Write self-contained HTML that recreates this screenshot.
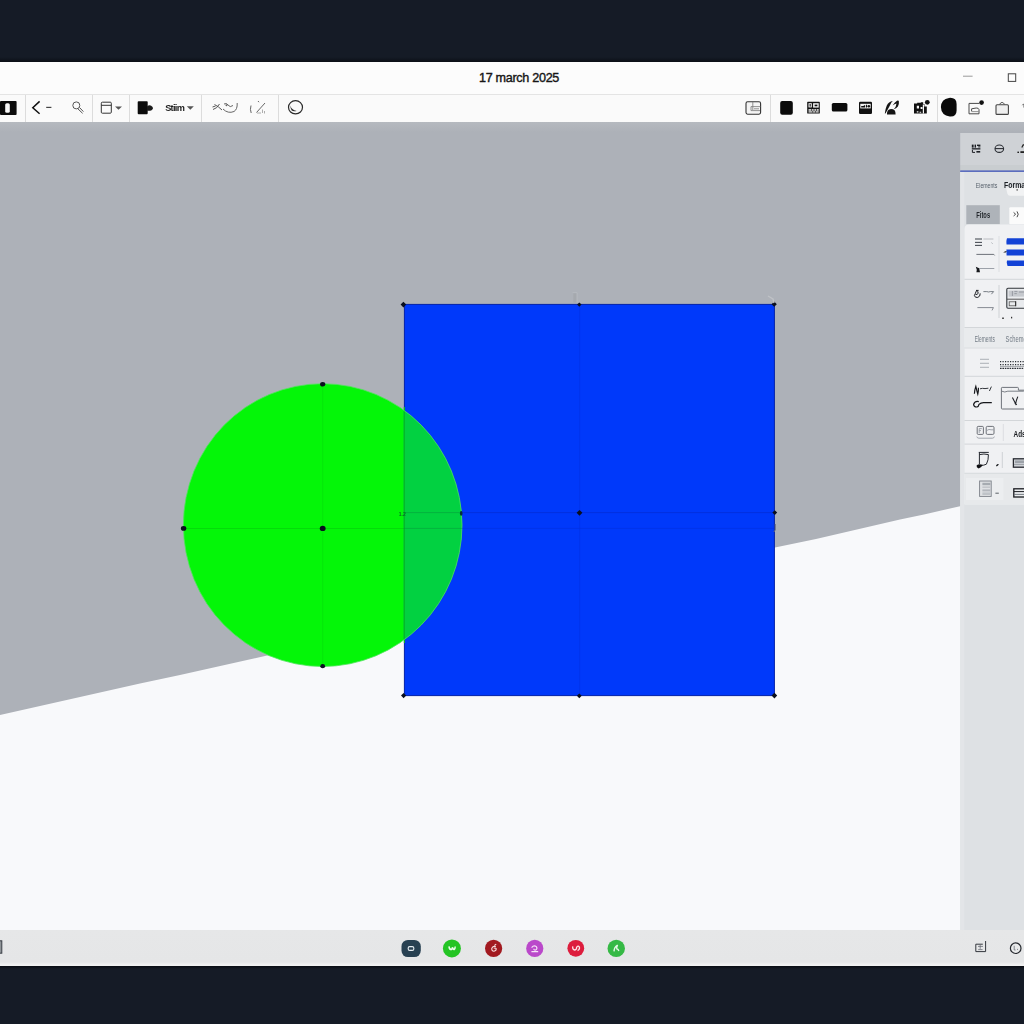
<!DOCTYPE html>
<html><head><meta charset="utf-8">
<style>
*{margin:0;padding:0;box-sizing:border-box}
html,body{width:1024px;height:1024px;overflow:hidden;background:#151b26;font-family:"Liberation Sans",sans-serif}
#root{position:absolute;left:0;top:0;width:1024px;height:1024px;overflow:hidden;background:#151b26}
.abs{position:absolute}
#titlebar{left:0;top:62px;width:1024px;height:32px;background:#fcfcfc}
#title{left:0;width:1038px;top:71.4px;text-align:center;font-size:12.6px;font-weight:normal;-webkit-text-stroke:0.4px #161616;color:#161616;letter-spacing:-0.3px;line-height:15px}
#toolbar{left:0;top:94px;width:1024px;height:28px;background:#fafafa;border-top:1px solid #e4e4e4}
.sep{position:absolute;top:95px;width:1px;height:27px;background:#dcdcdc}
#canvas{left:0;top:122px;width:1024px;height:808px;background:#f8f9fb}
#panel{left:960px;top:122px;width:64px;height:808px;background:#abaeb3}
#status{left:0;top:930px;width:1024px;height:36px;background:linear-gradient(#e6e7e8 0,#e5e6e7 32px,#f2f2f2 35px,#f2f2f2 36px)}
.t{position:absolute;white-space:nowrap;color:#222}
</style></head><body>
<div id="root">
<div class="abs" style="left:0;top:57px;width:1024px;height:5px;background:linear-gradient(#151b26,#0b0f16)"></div><div class="abs" style="left:0;top:966px;width:1024px;height:3px;background:linear-gradient(#0a0d13,#151b26)"></div>
<div class="abs" id="titlebar"></div>
<div class="abs" id="title">17 march 2025</div>
<div class="abs" id="toolbar"></div>
<div class="sep" style="left:25px"></div><div class="sep" style="left:92px"></div><div class="sep" style="left:129px"></div><div class="sep" style="left:201px"></div><div class="sep" style="left:278px"></div><div class="sep" style="left:770px"></div><div class="sep" style="left:937px"></div>
<div class="abs" id="canvas">
<svg width="1024" height="808" viewBox="0 122 1024 808" style="position:absolute;left:0;top:0">
<defs>
<linearGradient id="gg" x1="0" y1="122" x2="0" y2="132" gradientUnits="userSpaceOnUse"><stop offset="0" stop-color="#b5b9bf"/><stop offset="1" stop-color="#adb1b8"/></linearGradient>
<clipPath id="rc"><rect x="403.8" y="304.4" width="371" height="391.2"/></clipPath>
</defs>
<polygon points="0,122 1024,122 1024,492 960,506.2 924,514.4 900,519.6 816,539.1 775,547.4 265,656 180,675 140,683.4 40,706 0,715" fill="#adb1b8"/>
<rect x="0" y="122" width="1024" height="10" fill="url(#gg)"/>
<ellipse cx="322.7" cy="525.1" rx="139.3" ry="141.4" fill="#04f608"/>
<rect x="404.4" y="304.4" width="370" height="391.2" fill="#0039fa" stroke="#0422a8" stroke-width="1"/>
<ellipse cx="322.7" cy="525.1" rx="139.3" ry="141.4" fill="#02d141" clip-path="url(#rc)"/>
<line x1="404.4" y1="407" x2="404.4" y2="643" stroke="#04b82a" stroke-width="1.2"/>
<ellipse cx="322.7" cy="525.1" rx="139.3" ry="141.4" fill="none" stroke="#4fe45c" stroke-width="0.8"/>
<g stroke="#0a9a14" stroke-width="0.8" opacity="0.4">
<line x1="183" y1="528.4" x2="404" y2="528.4"/>
<line x1="322.7" y1="384" x2="322.7" y2="666" opacity="0.5"/>
</g>
<g stroke="#078a3c" stroke-width="0.8" opacity="0.5">
<line x1="404" y1="528.4" x2="462" y2="528.4"/>
<line x1="404" y1="512.6" x2="461" y2="512.6"/>
</g>
<g stroke="#0428c8" stroke-width="0.9" opacity="0.6">
<line x1="461" y1="512.6" x2="775" y2="512.6"/>
<line x1="462" y1="528.4" x2="775" y2="528.4" opacity="0.55"/>
<line x1="579.7" y1="305" x2="579.7" y2="696" opacity="0.5"/>
</g>
<g fill="#0a0f1e"><path d="M400.6 304.6 L403.4 301.8 L406.2 304.6 L403.4 307.4 Z"/><path d="M577.1 304.6 L579.3 302.4 L581.5 304.6 L579.3 306.8 Z"/><path d="M771.6 304.2 L774.2 301.6 L776.8 304.2 L774.2 306.8 Z"/><path d="M401.0 695.6 L403.6 693.0 L406.2 695.6 L403.6 698.2 Z"/><path d="M576.9 695.8 L579.3 693.4 L581.7 695.8 L579.3 698.2 Z"/><path d="M771.6 695.6 L774.4 692.8 L777.2 695.6 L774.4 698.4 Z"/><path d="M576.6 512.8 L579.5 509.9 L582.4 512.8 L579.5 515.7 Z"/><path d="M772.4 512.6 L774.8 510.2 L777.2 512.6 L774.8 515.0 Z"/><ellipse cx="322.7" cy="384.2" rx="2.5999999999999996" ry="2.3"/><ellipse cx="322.7" cy="666.2" rx="2.4" ry="2.1"/><ellipse cx="183.6" cy="528.4" rx="2.6999999999999997" ry="2.4"/><ellipse cx="322.7" cy="528.4" rx="2.9" ry="2.6"/><ellipse cx="461.2" cy="513.4" rx="1.3" ry="2.3" fill="#06303a"/></g>
<rect x="573.3" y="293.2" width="3.200" height="9.400" fill="#a5a9ae"/><path d="M572.600 292.600 h4.600 v10" fill="none" stroke="#b9bdc2" stroke-width="0.700"/>
<path d="M768 296 l5 3 l1 4" stroke="#bfc2c6" stroke-width="1.4" fill="none"/>
<path d="M775.3 524 v6 l-1.5 2" stroke="#6a7080" stroke-width="1" fill="none"/>
<text x="398.8" y="516.4" font-size="5" font-weight="bold" font-family="Liberation Sans, sans-serif" fill="#087026">1.2</text>
</svg>
</div>
<div class="abs" id="status"></div>
<svg class="abs" style="left:0;top:0" width="1024" height="1024" viewBox="0 0 1024 1024" font-family="Liberation Sans, sans-serif">
<!-- window controls -->
<line x1="963" y1="76.2" x2="972.6" y2="76.2" stroke="#9a9a9a" stroke-width="1"/>
<rect x="1008.3" y="73.8" width="7.4" height="7.6" fill="none" stroke="#444" stroke-width="1"/>
<!-- left toolbar -->
<g id="tb-left">
<rect x="0" y="101" width="16.6" height="14" rx="1" fill="#0c0c0c"/>
<rect x="5.2" y="103.2" width="4.6" height="9.6" rx="1.6" fill="#fafafa"/>
<path d="M39.6 101.4 L32.8 107.8 L39.6 113.8" fill="none" stroke="#111" stroke-width="1.5"/>
<line x1="46.2" y1="107.4" x2="51.4" y2="107.4" stroke="#444" stroke-width="1.2"/>
<circle cx="76.3" cy="105.4" r="3.5" fill="none" stroke="#555" stroke-width="1"/>
<path d="M77.5 108.5 L82.6 113.3 M79.6 107.6 L83.4 111.6" stroke="#555" stroke-width="1" fill="none"/>
<rect x="101.3" y="102.2" width="10" height="11" rx="1" fill="none" stroke="#333" stroke-width="1"/>
<line x1="101.3" y1="105.3" x2="111.3" y2="105.3" stroke="#333" stroke-width="1"/>
<path d="M115 106.4 h7 l-3.5 3.4 z" fill="#555"/>
<path d="M138.6 101.2 h8.2 q0.9 0 0.9 0.9 v11.2 q0 0.9 -0.9 0.9 h-8.2 q-0.9 0 -0.9 -0.9 v-11.2 q0 -0.9 0.9 -0.9 z" fill="#0c0c0c"/>
<path d="M147 106.5 q3 -2.5 5.6 0.4 q1.2 2 -1 3.4 q-2.6 1 -4.6 0.2 z" fill="#1a1a1a"/>
<text x="165.2" y="110.6" font-size="9.2" font-weight="bold" fill="#1c1c1c" letter-spacing="-0.7">Stiim</text>
<path d="M186.8 106.2 h7 l-3.5 3.6 z" fill="#555"/>
</g>
<g id="tb-left2" fill="none" stroke="#555" stroke-width="1">
<path d="M213 109.5 q4 -1 6.5 -5.5 M214.5 104.5 q4 2 7.5 5.5 M212.5 107 l3 -1"/>
<path d="M224 104 q3 -1.5 4 1 q2 3 5 0.5 M223 109 q5 5 11 2.5 q3.5 -2 3.2 -8.5" stroke="#666"/>
<circle cx="226.5" cy="105.3" r="1" fill="#666" stroke="none"/>
<path d="M251 105.5 q-1.2 4 0.2 7.5 M256.5 112.5 l8.5 -9.5 M258 101 l1 1.2" stroke="#666"/>
<path d="M257 113 h4 M262.5 109.5 v3.5 M264.5 111 v2.5" stroke="#999" stroke-width="0.8"/>
<ellipse cx="295.5" cy="107.3" rx="7" ry="6.6" stroke="#2a2a2a" stroke-width="1.2"/>
<path d="M290.5 105.5 q0.8 4.5 6.2 5.4 q-3 1 -5 -0.4 q-1.6 -1.8 -1.2 -5 z" fill="#2a2a2a" stroke="none"/>
</g>
<!-- right toolbar -->
<g id="tb-right">
<rect x="746" y="101.8" width="14.6" height="12.4" rx="1.6" fill="#f4f4f4" stroke="#333" stroke-width="1.1"/>
<path d="M752.8 102 v8 M751 106.6 h9.4 M751 106.6 v4 h9 M754 108.8 h5" fill="none" stroke="#777" stroke-width="0.8"/>
<rect x="780.2" y="101" width="12.6" height="13.8" rx="2" fill="#0b0b0b"/>
<rect x="807.2" y="101.800" width="12.600" height="11.800" rx="0.600" fill="#111"/>
<g fill="#f6f6f6"><rect x="808.500" y="103.200" width="3.300" height="4.200"/><rect x="813.100" y="103.200" width="5.600" height="4.400"/><rect x="808.500" y="109.200" width="10.200" height="1.500"/><rect x="808.500" y="111.300" width="10.200" height="1.200"/></g>
<g fill="#111"><rect x="809.600" y="104" width="1.100" height="2.600"/><rect x="814.600" y="104.600" width="2.800" height="1.700"/><rect x="811" y="109.200" width="0.800" height="1.500"/><rect x="813.600" y="109.200" width="0.800" height="1.500"/><rect x="816.200" y="109.200" width="0.800" height="1.500"/><rect x="812.300" y="111.300" width="0.800" height="1.200"/><rect x="815" y="111.300" width="0.800" height="1.200"/></g>
<rect x="831.8" y="103" width="15.6" height="8.6" rx="1.6" fill="#0b0b0b"/>
<rect x="859" y="101.800" width="13" height="12.200" rx="1.200" fill="#111"/>
<rect x="860.300" y="103.800" width="10.400" height="4.600" fill="#f4f4f4"/>
<path d="M861.200 107.400 v-1.400 h2.600 v-0.800 h1.400 v2.200 z M866 107.600 v-2.800 h1 v2.800 z" fill="#111"/><circle cx="868.800" cy="106.200" r="1.300" fill="#111"/>
<path d="M884.800 113.600 q0.800 -5.400 2 -8 q1.800 -4 6 -4.600 q-2 1.800 -2.400 3.400 q-2.400 4.600 -5 9.200 z" fill="#141414"/>
<path d="M892.600 105.400 q2 -3 4.400 -4.600 q1.800 -0.600 1.900 0.800 q0.300 3 -1 5 q-1.600 2.200 -4.200 2.600 q2.600 -2.600 2.800 -5.800 q-2 0.600 -3.900 2 z" fill="#141414"/>
<path d="M887 114.500 q-0.400 -5 4 -5.400 q4.800 0 4.600 5.400 z" fill="#141414"/>
<path d="M914 103.600 h3.200 v-0.800 h3.600 v-0.600 h2.400 v1.800 h1.200 v2.400 h2.400 v7.200 h-12.800 z" fill="#111"/>
<circle cx="927.300" cy="102.300" r="2.400" fill="#111"/>
<path d="M916.800 105.800 h2.200 v2.600 h-2.200 z M920.600 107 h1.800 v2 h-1.800 z M916.800 111.200 h1.600 v1.400 h-1.600 z M922.800 104.600 h1.200 v8.800 h-1.200 z M919.600 111.800 h1.600 v1 h-1.600 z" fill="#f6f6f6"/>
<path d="M949 97.9 q7.600 -0.6 7.600 6 v6.600 q0 6.400 -6.800 6 q-8.600 -1 -8.900 -9.400 q0.300 -8.200 8.100 -9.200 z" fill="#0a0a0a"/>
<path d="M979.400 103.400 h-10.400 v10.400 h10 v-4.200 q-0.400 -1.800 -2.800 -1.600 l-4.600 0.800 v2.600" fill="none" stroke="#4a4a4a" stroke-width="1"/>
<path d="M971.800 111.600 h6.800" stroke="#777" stroke-width="0.800"/>
<circle cx="981.600" cy="102.600" r="2.300" fill="#111"/>
<rect x="996" y="104.800" width="12.400" height="9.600" rx="1" fill="#efefef" stroke="#444" stroke-width="1.100"/>
<path d="M999.400 104.600 q2.600 -4.400 5.400 0" fill="none" stroke="#555" stroke-width="1"/>
<path d="M1022.400 105.200 q1 -1.800 1.600 -0.600 v3" stroke="#555" stroke-width="1" fill="none"/>
</g>
<g id="panel-g">
<rect x="960.2" y="133" width="64" height="32" fill="#cfd2d6"/>
<rect x="960.2" y="165" width="64" height="6" fill="#c9cdd0"/>
<rect x="960.2" y="170.400" width="64" height="1.500" fill="#5366bf"/>
<rect x="960.2" y="172" width="64" height="758" fill="#dee1e4"/><rect x="960.2" y="172" width="4" height="758" fill="#e3e5e8"/>
<!-- header icons -->
<g fill="#1c1f24">
<rect x="971.800" y="144.600" width="1.800" height="3"/><rect x="974.600" y="144.600" width="1.400" height="3"/><rect x="977" y="144.600" width="3.400" height="1.400"/><rect x="978.200" y="146.400" width="2.200" height="1"/>
<rect x="971.800" y="148.200" width="8.600" height="1.300"/>
<path d="M972.400 150 v2.400 h2.600" fill="none" stroke="#1c1f24" stroke-width="1"/><rect x="976.400" y="151" width="3.800" height="1.600"/>
</g>
<ellipse cx="999.300" cy="148.700" rx="4.300" ry="3.700" fill="none" stroke="#2a2d33" stroke-width="1.100"/>
<line x1="995" y1="148.600" x2="1003.600" y2="148.600" stroke="#2a2d33" stroke-width="1.100"/>
<path d="M1021.800 147.500 l1.400 -2.600 h1" stroke="#222" stroke-width="1.200" fill="none"/>
<rect x="1017.400" y="151.600" width="1.600" height="1.400" fill="#222"/><rect x="1020.400" y="151.200" width="3.600" height="1.800" fill="#222"/>
<!-- tabs -->
<text x="975.800" y="187.800" font-size="7.600" fill="#56606b" textLength="21.6" lengthAdjust="spacingAndGlyphs">Elements</text>
<path d="M1006 187.600 h18 v8.200 h-14 q-2 0 -2.600 -2 z" fill="#f2f3f4"/>
<text x="1004" y="187.800" font-size="8.2" font-weight="bold" fill="#1d2126" textLength="23.5" lengthAdjust="spacingAndGlyphs">Format</text>
<rect x="1016.400" y="189.300" width="1.600" height="1.200" fill="#555"/>
<!-- buttons -->
<rect x="966.300" y="205.200" width="33.500" height="19" fill="#aeb3b9"/>
<text x="976.300" y="217.700" font-size="9" font-weight="bold" fill="#23272c" textLength="13.8" lengthAdjust="spacingAndGlyphs">Fitos</text>
<rect x="1009.300" y="207.200" width="15" height="17" rx="1" fill="#fbfbfb"/>
<path d="M1013.600 212.400 l2 1.800 l-2 1.800 M1017 211.400 q2.400 2.800 0 5.800" fill="none" stroke="#333" stroke-width="0.900"/>
<!-- card -->
<path d="M964.500 229 q0 -4.500 4.500 -4.500 h55 v280 h-59.500 z" fill="#f0f1f3"/>
<g stroke="#d3d6d9" stroke-width="1">
<line x1="964.500" y1="279.300" x2="1024" y2="279.300"/><line x1="964.500" y1="327.500" x2="1024" y2="327.500"/>
<line x1="964.500" y1="347.900" x2="1024" y2="347.900"/><line x1="964.500" y1="376.300" x2="1024" y2="376.300"/>
<line x1="964.500" y1="420.500" x2="1024" y2="420.500"/><line x1="964.500" y1="444.100" x2="1024" y2="444.100"/>
<line x1="964.500" y1="473.300" x2="1024" y2="473.300"/>
<line x1="999" y1="236" x2="999" y2="272" stroke="#dddfe2"/><line x1="999" y1="285" x2="999" y2="318" stroke="#cfd2d5"/>
<line x1="1003.300" y1="424" x2="1003.300" y2="441" stroke="#dcdee1"/><line x1="1002.300" y1="452" x2="1002.300" y2="468" stroke="#cfd2d5"/>
</g>
<rect x="964.500" y="328" width="59.500" height="19.400" fill="#e9ebed"/>
<rect x="964.500" y="473.800" width="59.500" height="30.400" fill="#e7e9eb"/><rect x="966" y="478" width="37.500" height="22" fill="#eceef0"/>
<!-- row1 -->
<g stroke="#4a4f57" stroke-width="1.100">
<line x1="975" y1="239" x2="982" y2="239"/><line x1="975" y1="242.400" x2="982" y2="242.400"/><line x1="975" y1="245.400" x2="982" y2="245.400"/>
</g>
<line x1="983.400" y1="239" x2="993.400" y2="239" stroke="#b4b8bd" stroke-width="0.900"/>
<path d="M991.400 242.400 l1.400 1.600" stroke="#b4b8bd" stroke-width="0.900"/>
<path d="M976.400 254.400 h17.400 l0.800 1" stroke="#5d636b" stroke-width="0.900" fill="none"/>
<line x1="979.400" y1="268.500" x2="994.300" y2="268.500" stroke="#9297a0" stroke-width="0.900"/>
<path d="M975.800 266.800 l3.400 1.400 l0.800 4 h-3.600 l0.400 -2.400 z" fill="#16181c"/>
<g fill="#1242d6">
<path d="M1007 238.200 h17 v6.200 h-17.400 q-0.600 -3 0.400 -6.200 z"/>
<path d="M1006.400 249.600 h17.600 v5.900 h-17.400 z"/>
<path d="M1007 260.400 h17 v5.500 h-16.400 q-1.200 -2.600 -0.600 -5.500 z"/>
</g>
<path d="M1003.200 252.600 q1.600 -1.800 3.600 -1.600 l-1 1.600 z" fill="#1a1c22"/>
<!-- row2 -->
<path d="M976.600 290.400 q-1.200 3 -2.200 5.200 q0.600 2.400 3.400 1.800 q2.600 -0.800 2.400 -4 M976.600 290.400 q1.600 1 1.600 3 q-1 1.200 -2.600 1.200 M976 290.400 h2.600" fill="none" stroke="#1c1f24" stroke-width="1"/>
<path d="M983.400 291.600 h3.400 q2 0.800 3.400 0 h3.400 l-2.200 2.600" fill="none" stroke="#6a7078" stroke-width="0.900"/>
<path d="M977.400 307.600 h16 l-1.400 2.800" fill="none" stroke="#6a7078" stroke-width="0.800"/>
<rect x="1006.800" y="288.200" width="20" height="20" rx="1.200" fill="#e9ebee" stroke="#30343a" stroke-width="1.100"/>
<rect x="1008.600" y="290.600" width="16" height="6" fill="#c6c9ce"/><line x1="1007" y1="299.200" x2="1024" y2="299.200" stroke="#444" stroke-width="0.900"/>
<path d="M1012.400 291 v5 M1014.400 291.400 h3 M1014.400 293.600 h2.400 M1019 292 h5" stroke="#8a8f97" stroke-width="0.800" fill="none"/>
<rect x="1009.200" y="301.800" width="6.600" height="4" fill="none" stroke="#555" stroke-width="0.800"/><line x1="1015.600" y1="301.200" x2="1015.600" y2="306.200" stroke="#333" stroke-width="1"/>
<rect x="1002" y="317.600" width="2" height="1.200" fill="#333"/><rect x="1011" y="316.800" width="1.200" height="1.600" fill="#333"/>
<!-- row3 text -->
<text x="974.800" y="341.800" font-size="8.4" fill="#707983" textLength="20" lengthAdjust="spacingAndGlyphs">Elements</text>
<text x="1005.600" y="341.800" font-size="8.4" fill="#707983" textLength="21" lengthAdjust="spacingAndGlyphs">Scheme</text>
<!-- row4 -->
<g stroke="#a4a9af" stroke-width="0.900"><line x1="980" y1="359.300" x2="989" y2="359.300"/><line x1="980" y1="363.300" x2="989" y2="363.300"/><line x1="980" y1="367.300" x2="989" y2="367.300"/></g>
<g stroke="#2c3036" stroke-width="1.100" stroke-dasharray="1.200 1.300"><line x1="1000" y1="361.600" x2="1024" y2="361.600"/><line x1="1000" y1="364.600" x2="1024" y2="364.600"/><line x1="1000" y1="368.400" x2="1024" y2="368.400" stroke-dasharray="1.600 0.800"/></g>
<line x1="1000" y1="366.400" x2="1024" y2="366.400" stroke="#6a6f77" stroke-width="0.600"/>
<!-- row5 -->
<path d="M974.400 393.800 q0.400 -4.600 1.400 -7.400 q1 4.400 2 7.800 q0.800 -3.200 0.600 -6.400" fill="none" stroke="#15171b" stroke-width="1.200"/>
<path d="M980 388.800 q2.600 -0.800 5 -0.200 l3.400 -0.400 M991.400 386.600 l-2 4.400" fill="none" stroke="#33373d" stroke-width="1"/>
<path d="M978.800 401.600 q-3.600 -1 -5.200 2.600 q0.200 3 3.400 2.800 q1.600 -0.400 2 -2.600 q2 -2 5 -1.800 h7.800" fill="none" stroke="#15171b" stroke-width="1.200"/>
<path d="M1001.400 388.200 q0 -0.800 0.800 -0.800 h15.400 q0.800 0 0.800 0.800 v2 h6 M1001.400 388.200 v20 q0 0.800 0.800 0.800 h22" fill="none" stroke="#6e737a" stroke-width="1"/>
<path d="M1001.800 391.200 q3 1.600 6 0 h16" fill="none" stroke="#6e737a" stroke-width="0.900"/>
<path d="M1012.400 397.400 q1.600 3 3.200 6.400 q0.800 -4 2.200 -7.200 M1014.800 403.200 l2 1.600" fill="none" stroke="#1c1f24" stroke-width="1.100"/>
<!-- row6 -->
<rect x="977.200" y="426.400" width="6.200" height="8" rx="1" fill="none" stroke="#5d626a" stroke-width="0.900"/>
<rect x="986.200" y="426.400" width="7.800" height="8" rx="1.200" fill="none" stroke="#5d626a" stroke-width="0.900"/>
<path d="M979.200 433 v-4.400 h2.600 M979.200 430.600 h1.800 M987 430.400 q2 -1.600 4 -0.600 h2.600" fill="none" stroke="#8d929a" stroke-width="0.800"/>
<path d="M976.800 436.600 q0.400 1.600 2 1.600 h13.600 q1.600 0 2 -1.600" fill="none" stroke="#8d929a" stroke-width="0.800"/>
<text x="1013.600" y="437.400" font-size="8.600" font-weight="bold" fill="#16181c" textLength="12" lengthAdjust="spacingAndGlyphs">Ads</text>
<!-- row7 -->
<path d="M978.800 452.400 h10 M979.400 452.400 v11.600 M979.400 454.600 q4.600 -1.200 9 0 q0.200 5.600 -2 9.600 q-2.600 1.200 -5.600 1.400" fill="none" stroke="#26292f" stroke-width="1"/>
<path d="M976.600 465.600 q2 -2.200 6 -0.800 q-0.800 3 -4 3.600 q-2.400 -0.600 -2 -2.800 z" fill="#0e0f12"/>
<path d="M996 465.400 q1.200 -1.800 2.800 -1.400 q-0.400 2 -2.200 2.400 z" fill="#16181c"/>
<rect x="1013.400" y="458.800" width="14" height="8.400" fill="#d5d8dc" stroke="#26292f" stroke-width="1.300"/>
<rect x="1015" y="460.400" width="10" height="2.800" fill="#9da2a9"/><line x1="1014" y1="464.600" x2="1024" y2="464.600" stroke="#8a8f97" stroke-width="0.800"/>
<!-- row8 -->
<rect x="979.600" y="481" width="11.600" height="15.400" fill="#dfe1e4" stroke="#7c8189" stroke-width="0.900"/>
<rect x="982.400" y="482.800" width="8" height="2.400" fill="#a6abb1"/><rect x="982.400" y="486.400" width="8" height="1.600" fill="#c3c6cb"/><rect x="982.400" y="489.400" width="8" height="2" fill="#b3b7bd"/><rect x="982.400" y="492.400" width="8" height="2.600" fill="#bfc3c8"/>
<line x1="995.400" y1="493.200" x2="998.800" y2="493.200" stroke="#4a4f57" stroke-width="0.900"/>
<rect x="1013.800" y="488.800" width="14" height="8.200" fill="#eceef0" stroke="#1a1c20" stroke-width="1.300"/>
<line x1="1014" y1="491.600" x2="1024" y2="491.600" stroke="#1a1c20" stroke-width="1"/><line x1="1014" y1="494.400" x2="1024" y2="494.400" stroke="#6a6f77" stroke-width="0.900"/>
</g>
<g id="status-g">
<rect x="401.500" y="940" width="19.300" height="17" rx="6.400" fill="#284152"/>
<rect x="408.200" y="946.600" width="5.600" height="3.800" rx="1.500" fill="none" stroke="#e8eef2" stroke-width="1.100"/>
<circle cx="451.900" cy="948.400" r="9" fill="#24c424"/>
<path d="M449 946.400 q0.200 3.200 2.400 3.200 q1 -0.800 1 -2.400 q0.600 2.200 1.800 2.200 q1 -1 1 -3" fill="none" stroke="#e9fbe9" stroke-width="1.500"/>
<circle cx="493.600" cy="948.400" r="8.600" fill="#a21a20"/>
<path d="M495.800 946.600 q-2.800 -0.800 -4 1.600 q-0.400 2.800 2.200 3 q2.400 -0.400 2.200 -2.600 q-1.200 -1 -2.400 -0.200 M494.400 945.400 l1.800 -1.200" fill="none" stroke="#f6dede" stroke-width="1.100"/>
<circle cx="534.750" cy="948.400" r="8.600" fill="#ba48ca"/>
<path d="M531.600 947.600 q2.200 -2.800 4.800 -1 q1.400 2 -0.600 3.400 q-2 0.400 -2 -1.200 M531.400 951.600 h6.800" fill="none" stroke="#f6e2f8" stroke-width="1.100"/>
<circle cx="575.800" cy="948.300" r="8.400" fill="#dd1d3d"/>
<path d="M572.800 946.400 q-0.600 3.200 2 3.600 q2 -0.400 1.800 -2.600 q1.400 -2.400 2.800 -0.400 q0.600 2.600 -1.800 3.600" fill="none" stroke="#fde4e8" stroke-width="1.300"/>
<circle cx="616.250" cy="948.400" r="8.700" fill="#35b945"/>
<path d="M614 951.400 q0.200 -4.200 3.600 -6.200 q-1.400 2.200 -0.800 3.600 q1.600 0.400 2 2.200" fill="none" stroke="#e6f9e8" stroke-width="1.400"/>
<!-- right status icons -->
<path d="M985.600 941 v10.600 h-9.800 v-7.400 h7" fill="none" stroke="#33373d" stroke-width="1"/>
<path d="M978 946.400 h5 M980.200 944.600 v4.200 M978.200 949.600 h4.400" fill="none" stroke="#6a6f77" stroke-width="0.800"/>
<circle cx="1015.700" cy="948.200" r="5.300" fill="#e9eaeb" stroke="#26292f" stroke-width="1.200"/>
<path d="M1014.200 945.800 v4.200 h1.400 M1017 949.400 h1" fill="none" stroke="#6a6f77" stroke-width="0.800"/>
<rect x="-2" y="940.800" width="3.800" height="12.400" fill="#8f9498" stroke="#3a3f46" stroke-width="1"/>
</g>
</svg>
</div>
</body></html>
